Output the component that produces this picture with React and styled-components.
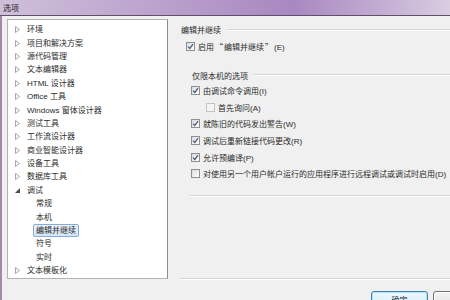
import React from "react";
import styled, { createGlobalStyle } from "styled-components";

const GlobalStyle = createGlobalStyle`
  html, body {
    margin: 0;
    padding: 0;
    background: #f0f0f0;
  }
  body {
    font-family: "Liberation Sans", "Noto Sans CJK SC", sans-serif;
    font-size: 8px;
    color: #2a2a2a;
  }
`;

const Window = styled.div`
  width: 450px;
  height: 300px;
  overflow: hidden;
  display: flex;
  flex-direction: column;
  background: #f0f0f0;
`;

const TitleBar = styled.div`
  height: 15px;
  flex: none;
  display: flex;
  align-items: center;
  padding-left: 3px;
  border-bottom: 1px solid #5f5068;
  background: linear-gradient(90deg, #cfc0da 0%, #bba2cd 35%, #a888c0 65%, #c3aed3 85%, #d9cde2 100%);
  color: #1c1c1c;
`;

const Frame = styled.div`
  flex: 1;
  display: flex;
  flex-direction: column;
  border-left: 2px solid #9d8ba9;
`;

const Content = styled.div`
  display: flex;
  padding-top: 3px;
`;

const Tree = styled.div`
  margin-left: 5px;
  width: 161px;
  height: 260px;
  box-sizing: border-box;
  flex: none;
  background: #fff;
  border: 1px solid #b4b4b4;
  border-right-color: #8c8c8c;
  padding-top: 3px;
`;

const TreeRow = styled.div`
  height: 13.4px;
  display: flex;
  align-items: center;
  padding-left: ${(p) => (p.$child ? 25 : 7)}px;
  white-space: nowrap;
`;

const Arrow = styled.span`
  width: 9px;
  height: 8px;
  flex: none;
  display: flex;
  align-items: center;
`;

const Label = styled.span`
  line-height: 11px;
  padding: 0 2px;
  border: 1px solid ${(p) => (p.$selected ? "#84acdd" : "transparent")};
  border-radius: 2px;
  background: ${(p) => (p.$selected ? "linear-gradient(#eaf3fd, #d5e6fa)" : "transparent")};
`;

const Pane = styled.div`
  flex: 1;
  padding-left: 12px;
  padding-top: 4px;
  min-width: 0;
`;

const Group = styled.div`
  height: 256px;
  box-sizing: border-box;
  border-bottom: 1px solid #d4d4d4;
  box-shadow: 0 1px 0 #fff;
  margin-right: -40px;
`;

const Caption = styled.div`
  display: flex;
  align-items: center;
  height: 12px;
  gap: 6px;
  padding-left: ${(p) => p.$indent || 1}px;
  white-space: nowrap;
`;

const Rule = styled.div`
  flex: 1;
  height: 1px;
  background: #d4d4d4;
  box-shadow: 0 1px 0 #fff;
  margin-top: ${(p) => p.$offset || 0}px;
`;

const CheckRow = styled.label`
  display: flex;
  align-items: center;
  height: ${(p) => p.$h || 16.6}px;
  padding-left: ${(p) => p.$indent}px;
  gap: 3px;
  white-space: nowrap;
`;

const Quote = styled.span`
  font-family: "Noto Sans CJK SC", sans-serif;
  margin: 0 1px;
`;

const Box = styled.span`
  width: 9px;
  height: 9px;
  box-sizing: border-box;
  flex: none;
  border: 1px solid ${(p) => (p.$dim ? "#c4c4c4" : "#8e8f8f")};
  background: ${(p) => (p.$dim ? "#f4f4f4" : "linear-gradient(135deg, #dcdcdc, #fff)")};
  display: flex;
  align-items: center;
  justify-content: center;
`;

const Inner = styled.div`
  margin-left: 10px;
  margin-top: 12px;
  padding-bottom: 13px;
  border-bottom: 1px solid #d4d4d4;
  box-shadow: 0 1px 0 #fff;
`;

const Footer = styled.div`
  display: flex;
  justify-content: flex-end;
  gap: 5px;
  margin-top: 12px;
  margin-right: -40px;
`;

const Button = styled.div`
  width: 57px;
  height: 23px;
  box-sizing: border-box;
  flex: none;
  border: 1px solid ${(p) => (p.$default ? "#3c7fb1" : "#707070")};
  border-radius: 3px;
  box-shadow: inset 0 0 0 1px ${(p) => (p.$default ? "#b6e4f9" : "#fcfcfc")};
  background: ${(p) =>
    p.$default ? "linear-gradient(#eaf6fd, #d6eefb)" : "linear-gradient(#f2f2f2, #dcdcdc)"};
  display: flex;
  align-items: center;
  justify-content: center;
  padding-bottom: 6px;
`;

const Collapsed = () => (
  <svg width="5" height="7" viewBox="0 0 5 7">
    <polygon points="0.5,0.5 4.5,3.5 0.5,6.5" fill="#fff" stroke="#a6a6a6" strokeWidth="1" />
  </svg>
);

const Expanded = () => (
  <svg width="5" height="5" viewBox="0 0 5 5">
    <polygon points="5,0 5,5 0,5" fill="#4a4a4a" />
  </svg>
);

const Check = () => (
  <svg width="7" height="7" viewBox="0 0 7 7">
    <path d="M1 3.6 L2.8 5.4 L6 1.2" fill="none" stroke="#4b5f80" strokeWidth="1.3" />
  </svg>
);

const tree = [
  { text: "环境" },
  { text: "项目和解决方案" },
  { text: "源代码管理" },
  { text: "文本编辑器" },
  { text: "HTML 设计器" },
  { text: "Office 工具" },
  { text: "Windows 窗体设计器" },
  { text: "测试工具" },
  { text: "工作流设计器" },
  { text: "商业智能设计器" },
  { text: "设备工具" },
  { text: "数据库工具" },
  { text: "调试", open: true },
  { text: "常规", child: true },
  { text: "本机", child: true },
  { text: "编辑并继续", child: true, selected: true },
  { text: "符号", child: true },
  { text: "实时", child: true },
  { text: "文本模板化" },
];

const options = [
  { text: "由调试命令调用(I)", checked: true, indent: 1, h: 18 },
  { text: "首先询问(A)", indent: 16, dim: true },
  { text: "就陈旧的代码发出警告(W)", checked: true, indent: 1 },
  { text: "调试后重新链接代码更改(R)", checked: true, indent: 1 },
  { text: "允许预编译(P)", checked: true, indent: 1 },
  { text: "对使用另一个用户帐户运行的应用程序进行远程调试或调试时启用(D)", indent: 1 },
];

export default function App() {
  return (
    <Window>
      <GlobalStyle />
      <TitleBar>选项</TitleBar>
      <Frame>
        <Content>
          <Tree>
            {tree.map((item) => (
              <TreeRow key={item.text} $child={item.child}>
                {!item.child && <Arrow>{item.open ? <Expanded /> : <Collapsed />}</Arrow>}
                <Label $selected={item.selected}>{item.text}</Label>
              </TreeRow>
            ))}
          </Tree>
          <Pane>
            <Group>
              <Caption>
                <span>编辑并继续</span>
                <Rule />
              </Caption>
              <CheckRow $indent={6} $h={22}>
                <Box>
                  <Check />
                </Box>
                <span>
                  启用<Quote>“</Quote>编辑并继续<Quote>”</Quote>(E)
                </span>
              </CheckRow>
              <Inner>
                <Caption $indent={2}>
                  <span>仅限本机的选项</span>
                  <Rule $offset={-2} />
                </Caption>
                {options.map((o) => (
                  <CheckRow key={o.text} $indent={o.indent} $h={o.h}>
                    <Box $dim={o.dim}>{o.checked && <Check />}</Box>
                    <span>{o.text}</span>
                  </CheckRow>
                ))}
              </Inner>
            </Group>
          </Pane>
        </Content>
        <Footer>
          <Button $default>确定</Button>
          <Button>取消</Button>
        </Footer>
      </Frame>
    </Window>
  );
}
